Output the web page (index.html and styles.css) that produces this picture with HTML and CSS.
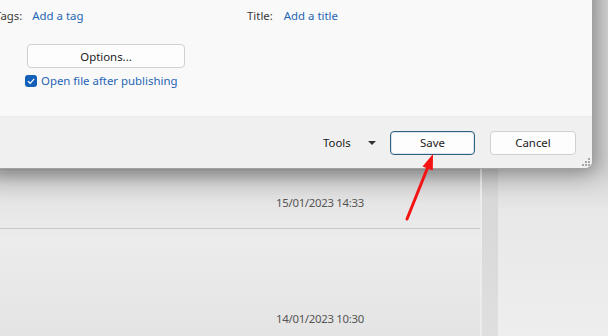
FILE: index.html
```html
<!DOCTYPE html>
<html lang="en">
<head>
    <meta charset="UTF-8">
    <title>Save As</title>
    <link rel="stylesheet" href="styles.css">
</head>
<body>
<div class="app">
    <div class="list">
        <div class="row row-top"></div>
        <div class="row row-short"><span class="date">15/01/2023 14:33</span></div>
        <div class="row row-tall"><span class="date">14/01/2023 10:30</span></div>
    </div>
    <div class="scroll"></div>
    <div class="side"></div>
</div>

<div class="dialog">
    <div class="dlg-body">
        <div class="fields">
            <div class="field field-tags">
                <span class="label">Tags:</span>
                <span class="link">Add a tag</span>
            </div>
            <div class="field field-title">
                <span class="label">Title:</span>
                <span class="link">Add a title</span>
            </div>
        </div>
        <div class="opts">
            <button class="btn btn-options">Options...</button>
            <label class="check">
                <span class="box">
                    <svg width="10" height="10" viewBox="0 0 10 10"><path d="M2 5.2 L4.2 7.3 L8.2 2.8" fill="none" stroke="#fff" stroke-width="1.2"/></svg>
                </span>
                <span class="check-text">Open file after publishing</span>
            </label>
        </div>
    </div>
    <div class="dlg-foot">
        <div class="tools">Tools <span class="caret"></span></div>
        <button class="btn btn-save">Save</button>
        <button class="btn btn-cancel">Cancel</button>
        <span class="grip">
            <svg width="10" height="10" viewBox="0 0 10 10" fill="#a8a8a8">
                <rect x="7" y="1" width="2" height="2"/>
                <rect x="4" y="4" width="2" height="2"/><rect x="7" y="4" width="2" height="2"/>
                <rect x="1" y="7" width="2" height="2"/><rect x="4" y="7" width="2" height="2"/><rect x="7" y="7" width="2" height="2"/>
            </svg>
        </span>
    </div>
</div>

<svg class="arrow" width="608" height="336" viewBox="0 0 608 336">
    <line x1="407" y1="219" x2="429.5" y2="163" stroke="#f41414" stroke-width="3" stroke-linecap="round"/>
    <polygon points="433,154 422.5,166.5 432.8,170.5" fill="#f41414"/>
</svg>
</body>
</html>
```

FILE: styles.css
```css
html,
body {
    margin: 0;
    padding: 0;
}
body {
    position: relative;
    width: 608px;
    height: 336px;
    overflow: hidden;
    font-family: "Segoe UI", "Noto Sans", sans-serif;
    font-size: 11.4px;
    color: #1b1b1b;
    background: #ececec;
}
.app {
    display: flex;
    height: 336px;
}
.list {
    width: 480px;
    background: linear-gradient(to bottom, #b9b9b9 168px, #d6d6d6 185px, #e6e6e6 205px, #ececec 240px, #e4e4e4 336px);
}
.row {
    display: flex;
    align-items: flex-end;
    justify-content: center;
    box-sizing: border-box;
    border-bottom: 1px solid #c8c8c8;
    padding-bottom: 18px;
    padding-left: 160px;
}
.row-top {
    height: 172px;
}
.row-short {
    height: 57px;
}
.row-tall {
    height: 116px;
}
.date {
    color: #555;
    letter-spacing: -0.3px;
}
.scroll {
    width: 16px;
    margin-left: 2px;
    background: linear-gradient(to bottom, #c4c4c4 168px, #d8d8d8 200px, #dfdfdf 336px);
}
.side {
    flex: 1;
    background: linear-gradient(to bottom, #d0d0d0 168px, #e8e8e8 210px, #eeeeee 336px);
}
.dialog {
    position: absolute;
    left: -10px;
    top: -20px;
    width: 603px;
    height: 189px;
    box-sizing: border-box;
    display: flex;
    flex-direction: column;
    border: 1px solid #a2a2a2;
    border-radius: 0 0 8px 0;
    background: #f9f9f9;
    box-shadow: 0 6px 22px rgba(0, 0, 0, .28), 6px 0 14px rgba(0, 0, 0, .12);
    overflow: hidden;
}
.dlg-body {
    height: 135px;
    padding: 25px 0 0 10px;
    box-sizing: border-box;
}
.fields {
    display: flex;
    line-height: 20px;
}
.field {
    display: flex;
    gap: 10px;
}
.field-tags {
    width: 252px;
    margin-left: -6px;
}
.field-title {
    gap: 11px;
}
.label {
    color: #3a3a3a;
}
.link {
    color: #1f65b5;
}
.opts {
    margin: 18px 0 0 26px;
    display: flex;
    flex-direction: column;
    align-items: flex-start;
    gap: 5px;
}
.btn {
    box-sizing: border-box;
    height: 24px;
    border: 1px solid #d0d0d0;
    border-radius: 4px;
    background: #fdfdfd;
    font-family: inherit;
    font-size: 11.4px;
    color: #1b1b1b;
    padding: 0;
}
.btn-options {
    width: 158px;
}
.check {
    display: flex;
    align-items: center;
    gap: 4px;
    margin-left: -2px;
}
.box {
    display: flex;
    align-items: center;
    justify-content: center;
    width: 12px;
    height: 12px;
    border-radius: 3px;
    background: #1360b8;
}
.check-text {
    color: #1f65b5;
}
.dlg-foot {
    flex: 1;
    position: relative;
    display: flex;
    align-items: center;
    padding: 0 0 0 332px;
    background: #f0f0f0;
    border-top: 1px solid #ececec;
}
.tools {
    display: flex;
    align-items: center;
    gap: 17px;
    width: 67px;
    color: #1b1b1b;
}
.caret {
    width: 0;
    height: 0;
    border-left: 4px solid transparent;
    border-right: 4px solid transparent;
    border-top: 4px solid #333;
}
.btn-save {
    width: 85px;
    border-color: #32617e;
    box-shadow: inset 0 0 0 1px #d9e3ea;
}
.btn-cancel {
    width: 86px;
    margin-left: 15px;
}
.grip {
    position: absolute;
    right: 1px;
    bottom: 1px;
    display: flex;
}
.arrow {
    position: absolute;
    left: 0;
    top: 0;
}
```
